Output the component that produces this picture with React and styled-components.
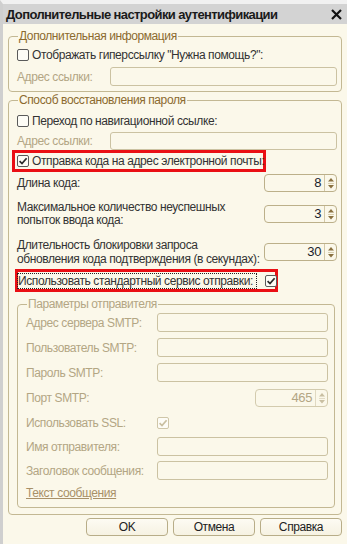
import React from "react";
import styled, { createGlobalStyle, css } from "styled-components";

const Global = createGlobalStyle`
  html, body { margin: 0; padding: 0; background: #fbf8ea; }
  body { font-family: "Liberation Sans", Arial, sans-serif; font-size: 12px; letter-spacing: -0.4px; }
  * { box-sizing: border-box; }
`;

const C = {
  bg: "#fbf8ea",
  text: "#333333",
  dis: "#b3a684",
  legend: "#8b6a2e",
  border: "#c3b893",
  input: "#cbc2a2",
  red: "#ea0f14",
};

const Window = styled.div`
  width: 347px;
  height: 544px;
  display: flex;
  flex-direction: column;
  background: ${C.bg};
  border-left: 3px solid #cfcfcf;
  border-top: 4px solid #f1f1f1;
  overflow: hidden;
`;

const TitleBar = styled.div`
  height: 20px;
  flex: none;
  display: flex;
  align-items: center;
  justify-content: space-between;
  background: #d3d3d3;
  padding: 0 5px 0 3px;
`;

const Title = styled.div`
  font-weight: bold;
  font-size: 13px;
  color: #1a1a1a;
  letter-spacing: -0.6px;
`;

const Body = styled.div`
  flex: 1;
  display: flex;
  flex-direction: column;
  padding: 4px 5px 0 5px;
`;

const Group = styled.fieldset`
  margin: 0;
  border: 1px solid ${C.border};
  border-radius: 4px;
  padding: ${(p) => p.$pad || "0 4px 5px 8px"};
  display: flex;
  flex-direction: column;
  min-width: 0;
  ${(p) => p.$mt && css`margin-top: ${p.$mt}px;`}
  ${(p) => p.$mr && css`margin-right: ${p.$mr}px;`}
`;

const Legend = styled.legend`
  padding: 0 1px;
  margin-left: 1px;
  line-height: 16px;
  color: ${(p) => (p.$disabled ? C.dis : C.legend)};
`;

const Row = styled.div`
  display: flex;
  align-items: center;
  height: ${(p) => p.$h || 19}px;
  margin-top: ${(p) => p.$mt || 0}px;
  flex: none;
`;

const Label = styled.span`
  color: ${(p) => (p.$disabled ? C.dis : C.text)};
  line-height: ${(p) => p.$lh || 14}px;
  width: ${(p) => (p.$w ? p.$w + "px" : "auto")};
  flex: ${(p) => (p.$w ? "none" : "1")};
  white-space: nowrap;
`;

const Input = styled.div`
  flex: 1;
  height: 100%;
  border: 1px solid ${C.input};
  border-radius: 3px;
  background: ${C.bg};
`;

const Box = styled.span`
  width: 12px;
  height: 12px;
  flex: none;
  border: 1px solid ${(p) => (p.$disabled ? "#cfc6a8" : "#5a5a5a")};
  border-radius: 2px;
  background: #fdfcf6;
  display: inline-flex;
  align-items: center;
  justify-content: center;
  margin-right: ${(p) => p.$mr ?? 3}px;
`;

const Check = ({ checked, disabled, mr }) => (
  <Box $disabled={disabled} $mr={mr}>
    {checked && (
      <svg width="10" height="10" viewBox="0 0 10 10">
        <path
          d="M1.6 5.2 L4 7.6 L8.6 2.2"
          fill="none"
          stroke={disabled ? "#c9bfa0" : "#2b2b2b"}
          strokeWidth="1.7"
        />
      </svg>
    )}
  </Box>
);

const RedBox = styled.div`
  border: 3px solid ${C.red};
  display: flex;
  align-items: center;
  flex: none;
  height: ${(p) => p.$h}px;
  width: ${(p) => p.$w}px;
  margin-left: ${(p) => p.$ml}px;
  margin-top: ${(p) => p.$mt || 0}px;
  padding-left: ${(p) => p.$pl || 0}px;
`;

const Focus = styled.span`
  outline: 1px dotted #222;
  outline-offset: 0px;
  color: ${C.text};
  line-height: 14px;
  width: 238px;
  flex: none;
  margin-right: 9px;
  white-space: nowrap;
`;

const SpinWrap = styled.div`
  width: ${(p) => p.$w || 73}px;
  height: ${(p) => p.$h || 18}px;
  flex: none;
  margin-left: auto;
  border: 1px solid ${(p) => (p.$disabled ? "#d3cbae" : "#bcb08a")};
  border-radius: 4px;
  display: flex;
  background: ${C.bg};
`;

const SpinValue = styled.div`
  flex: 1;
  text-align: right;
  padding-right: 3px;
  line-height: 16px;
  font-size: 13px;
  color: ${(p) => (p.$disabled ? C.dis : "#1a1e2c")};
`;

const SpinBtns = styled.div`
  width: 12px;
  border-left: 1px solid ${(p) => (p.$disabled ? "#e0d9c2" : "#d3c9a8")};
  display: flex;
  align-items: center;
  justify-content: center;
`;

const Spin = ({ value, disabled, w }) => {
  const col = disabled ? "#c9bfa2" : "#8a7140";
  return (
    <SpinWrap $disabled={disabled} $w={w}>
      <SpinValue $disabled={disabled}>{value}</SpinValue>
      <SpinBtns $disabled={disabled}>
        <svg width="8" height="14" viewBox="0 0 8 14">
          <path d="M4 2 L7 5.5 H1 Z" fill={col} />
          <line x1="1" y1="7.5" x2="7" y2="7.5" stroke={disabled ? "#e2dbc6" : "#d8cfb0"} />
          <path d="M1 9 H7 L4 12.5 Z" fill={col} />
        </svg>
      </SpinBtns>
    </SpinWrap>
  );
};

const Link = styled.span`
  color: #a89068;
  text-decoration: underline;
  line-height: 14px;
`;

const Buttons = styled.div`
  display: flex;
  justify-content: flex-end;
  gap: 5px;
  padding: 3px 0 0 0;
`;

const Button = styled.div`
  width: ${(p) => p.$w || 82}px;
  height: 18px;
  border: 1px solid #b8ad88;
  border-radius: 4px;
  background: linear-gradient(#fdfbf3, #f6f2e2);
  color: #222;
  display: flex;
  align-items: center;
  justify-content: center;
  line-height: 14px;
`;

const CloseIcon = () => (
  <svg width="11" height="11" viewBox="0 0 11 11">
    <path d="M1 1 L10 10 M10 1 L1 10" stroke="#111" strokeWidth="2.2" />
  </svg>
);

export default function App() {
  return (
    <>
      <Global />
      <Window>
        <TitleBar>
          <Title>Дополнительные настройки аутентификации</Title>
          <CloseIcon />
        </TitleBar>
        <Body>
          <Group $pad="0 4px 5px 8px">
            <Legend>Дополнительная информация</Legend>
            <Row $h={16} $mt={3}>
              <Check />
              <Label>Отображать гиперссылку "Нужна помощь?":</Label>
            </Row>
            <Row $mt={4}>
              <Label $disabled $w={93}>Адрес ссылки:</Label>
              <Input />
            </Row>
          </Group>

          <Group $pad="0 4px 0 8px">
            <Legend>Способ восстановления пароля</Legend>
            <Row $h={16} $mt={5}>
              <Check />
              <Label>Переход по навигационной ссылке:</Label>
            </Row>
            <Row $h={18} $mt={3}>
              <Label $disabled $w={93}>Адрес ссылки:</Label>
              <Input />
            </Row>
            <RedBox $w={254} $h={22} $ml={-5} $pl={2}>
              <Check checked />
              <Label>Отправка кода на адрес электронной почты:</Label>
            </RedBox>
            <Row $h={18} $mt={2}>
              <Label>Длина кода:</Label>
              <Spin value="8" />
            </Row>
            <Row $h={28} $mt={8}>
              <Label $lh={13}>Максимальное количество неуспешных<br />попыток ввода кода:</Label>
              <Spin value="3" />
            </Row>
            <Row $h={28} $mt={10}>
              <Label $lh={14}>Длительность блокировки запроса<br />обновления кода подтверждения (в секундах):</Label>
              <Spin value="30" />
            </Row>
            <RedBox $w={263} $h={23} $ml={-2} $mt={3}>
              <Focus>Использовать стандартный сервис отправки:</Focus>
              <Check checked mr={0} />
            </RedBox>

            <Group $pad="0 6px 6px 8px" $mt={4} $mr={2}>
              <Legend $disabled>Параметры отправителя</Legend>
              <Row $mt={1}>
                <Label $disabled $w={131}>Адрес сервера SMTP:</Label>
                <Input />
              </Row>
              <Row $mt={6}>
                <Label $disabled $w={131}>Пользователь SMTP:</Label>
                <Input />
              </Row>
              <Row $mt={6}>
                <Label $disabled $w={131}>Пароль SMTP:</Label>
                <Input />
              </Row>
              <Row $mt={6}>
                <Label $disabled>Порт SMTP:</Label>
                <Spin value="465" disabled />
              </Row>
              <Row $mt={6}>
                <Label $disabled $w={131}>Использовать SSL:</Label>
                <Check checked disabled />
              </Row>
              <Row $mt={5}>
                <Label $disabled $w={131}>Имя отправителя:</Label>
                <Input />
              </Row>
              <Row $mt={5}>
                <Label $disabled $w={131}>Заголовок сообщения:</Label>
                <Input />
              </Row>
              <Row $h={16} $mt={5}>
                <Link>Текст сообщения</Link>
              </Row>
            </Group>
            <Row $h={6} />
          </Group>
          <Buttons>
            <Button>OK</Button>
            <Button>Отмена</Button>
            <Button>Справка</Button>
          </Buttons>
        </Body>
      </Window>
    </>
  );
}
